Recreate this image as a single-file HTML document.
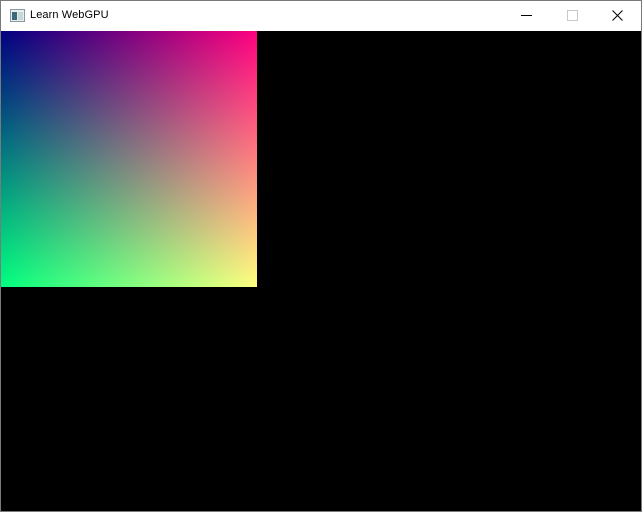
<!DOCTYPE html>
<html><head><style>
html,body{margin:0;padding:0;width:642px;height:512px;overflow:hidden;background:#fff}
.win{position:absolute;left:0;top:0;width:640px;height:510px;border:1px solid #7a7a7a;background:#000}
.tb{position:absolute;left:0;top:0;width:640px;height:30px;background:#fff}
.title{position:absolute;left:29px;top:8px;font:11px "Liberation Sans",sans-serif;color:#000;letter-spacing:0.1px}
.sq{position:absolute;left:0;top:30px;width:256px;height:256px;background:linear-gradient(to right,rgb(0,0,128),rgb(255,0,128));isolation:isolate}
.sq::after{content:"";position:absolute;inset:0;background:linear-gradient(to bottom,#000,rgb(0,255,0));mix-blend-mode:screen}
</style></head><body>
<div class="win">
<div class="tb">
<svg style="position:absolute;left:9px;top:8px" width="16" height="14" viewBox="0 0 16 14">
<rect x="0.5" y="0.5" width="14" height="12" fill="#e8eef0" stroke="#8a9aa0"/>
<rect x="2" y="3" width="5" height="8" fill="#3a6a7a"/>
<rect x="8" y="3" width="5" height="8" fill="#c8d8d8"/>
</svg>
<div class="title">Learn WebGPU</div>
<svg style="position:absolute;left:520px;top:14px" width="11" height="2"><rect width="11" height="1" fill="#000"/></svg>
<svg style="position:absolute;left:566px;top:9px" width="11" height="11"><rect x="0.5" y="0.5" width="10" height="10" fill="none" stroke="#c8c8c8"/></svg>
<svg style="position:absolute;left:611px;top:9px" width="11" height="11"><path d="M0.5 0.5L10.5 10.5M10.5 0.5L0.5 10.5" stroke="#000" stroke-width="1"/></svg>
</div>
<div class="sq"></div>
</div>
</body></html>
